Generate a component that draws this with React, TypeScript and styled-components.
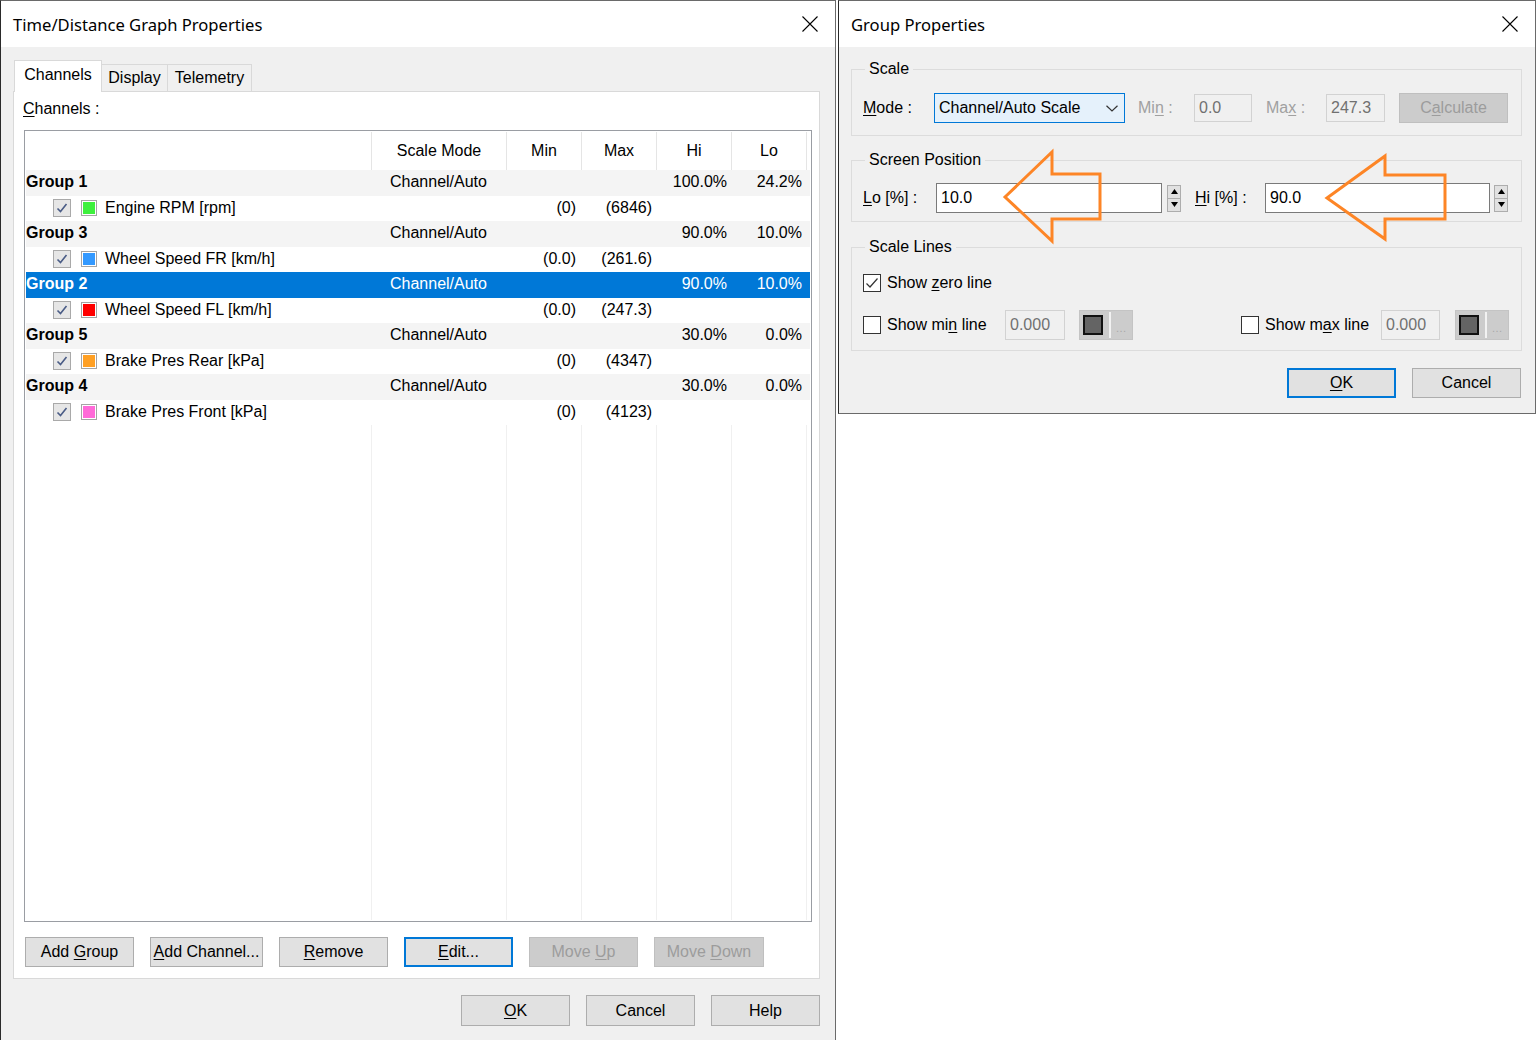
import * as React from 'react'
import styled, { createGlobalStyle, css } from 'styled-components'

const GlobalStyle = createGlobalStyle`
  html, body {
    margin: 0;
    padding: 0;
    background: #ffffff;
  }
  body {
    font-family: "Liberation Sans", Arial, sans-serif;
    font-size: 16px;
    color: #000;
  }
  * {
    box-sizing: border-box;
  }
  u {
    text-underline-offset: 2px;
  }
`

const Desktop = styled.div`
  display: flex;
  align-items: flex-start;
  width: 1537px;
  height: 1040px;
  overflow: hidden;
`

const Window = styled.div<{ $width: number; $height: number; $gap?: number }>`
  position: relative;
  flex-shrink: 0;
  display: flex;
  flex-direction: column;
  width: ${p => p.$width}px;
  height: ${p => p.$height}px;
  margin-left: ${p => p.$gap || 0}px;
  background: #f0f0f0;
  border: 1px solid #6a6a6a;
  border-left-color: #2a2a2a;
`

const TitleBar = styled.div`
  height: 46px;
  flex-shrink: 0;
  display: flex;
  align-items: center;
  justify-content: space-between;
  padding: 0 17px 0 12px;
  background: #ffffff;
  font-family: "Noto Sans", "Liberation Sans", sans-serif;
  font-size: 16.6px;
  color: #000;
`

const CloseIcon = () => (
  <svg width="16" height="16" viewBox="0 0 16 16">
    <path d="M0.5 0.5L15.5 15.5M15.5 0.5L0.5 15.5" stroke="#000" strokeWidth="1.1" fill="none"/>
  </svg>
)

/* ---------- left dialog ---------- */

const LeftBody = styled.div`
  flex: 1;
  display: flex;
  flex-direction: column;
  padding: 13px 0 0 12px;
`

const TabStrip = styled.div`
  display: flex;
  align-items: flex-end;
  height: 31px;
  padding-left: 1px;
  position: relative;
  z-index: 1;
`

const Tab = styled.div<{ $active?: boolean; $width: number }>`
  width: ${p => p.$width}px;
  height: ${p => (p.$active ? 31 : 27)}px;
  margin-right: -1px;
  border: 1px solid #d9d9d9;
  border-bottom: none;
  background: ${p => (p.$active ? '#ffffff' : '#f0f0f0')};
  display: flex;
  align-items: center;
  justify-content: center;
  ${p => p.$active && css`
    margin-bottom: -1px;
    height: 32px;
    padding-bottom: 3px;
  `}
`

const TabPanel = styled.div`
  width: 807px;
  height: 888px;
  background: #ffffff;
  border: 1px solid #d9d9d9;
  display: flex;
  flex-direction: column;
  padding: 8px 0 11px 10px;
`

const PanelLabel = styled.div`
  line-height: 18px;
  margin-left: -1px;
`

const ListBox = styled.div`
  margin-top: 12px;
  width: 788px;
  height: 792px;
  border: 1px solid #9a9da3;
  padding: 1px;
  display: flex;
  flex-direction: column;
`

const columns = '346px 135px 75px 75px 75px 75px 1fr'

const HeaderRow = styled.div`
  display: grid;
  grid-template-columns: ${columns};
  height: 38px;
  flex-shrink: 0;
`

const HeaderCell = styled.div<{ $last?: boolean }>`
  display: flex;
  align-items: center;
  justify-content: center;
  border-right: ${p => (p.$last ? 'none' : '1px solid #e5e5e5')};
`

const Row = styled.div<{ $kind: 'group' | 'channel'; $selected?: boolean }>`
  display: grid;
  grid-template-columns: ${columns};
  height: 25.5px;
  align-items: center;
  white-space: nowrap;
  background: ${p => (p.$selected ? '#0078d7' : p.$kind === 'group' ? '#f4f4f4' : '#ffffff')};
  color: ${p => (p.$selected ? '#ffffff' : '#000000')};
`

const Cell = styled.div<{ $align?: 'left' | 'right'; $pad?: number }>`
  text-align: ${p => p.$align || 'left'};
  padding-left: ${p => (p.$align === 'right' ? 0 : p.$pad || 0)}px;
  padding-right: ${p => (p.$align === 'right' ? p.$pad || 0 : 0)}px;
  overflow: hidden;
  margin-top: -1px;
`

const GroupName = styled.span`
  font-weight: bold;
`

const ChannelCell = styled.div`
  display: flex;
  align-items: center;
  padding-left: 27px;
  margin-top: -1px;
`

const ListCheck = styled.span`
  width: 18px;
  height: 18px;
  border: 1px solid #a9a9a9;
  background: #e6e6e6;
  display: inline-flex;
  align-items: center;
  justify-content: center;
`

const Swatch = styled.span<{ $color: string }>`
  width: 16px;
  height: 16px;
  margin-left: 10px;
  margin-right: 8px;
  border: 1px solid #a5a5a5;
  padding: 1px;
  background: ${p => p.$color};
  background-clip: content-box;
`

const Filler = styled.div`
  flex: 1;
  display: grid;
  grid-template-columns: ${columns};
`

const FillerCol = styled.div<{ $last?: boolean }>`
  border-right: ${p => (p.$last ? 'none' : '1px solid #f0f0f0')};
`

const ButtonRow = styled.div<{ $gap: number }>`
  display: flex;
  gap: ${p => p.$gap}px;
`

const ButtonFrame = styled.div<{ $width: number; $height?: number; $focused?: boolean; $disabled?: boolean; $ml?: number }>`
  width: ${p => p.$width}px;
  height: ${p => p.$height || 30}px;
  margin-left: ${p => p.$ml || 0}px;
  flex-shrink: 0;
  display: flex;
  align-items: center;
  justify-content: center;
  background: #e1e1e1;
  border: 1px solid #adadad;
  color: #000;
  white-space: nowrap;
  ${p => p.$focused && css`
    border: 2px solid #0078d7;
  `}
  ${p => p.$disabled && css`
    background: #cccccc;
    border-color: #bfbfbf;
    color: #9c9c9c;
  `}
`

interface ButtonProps {
  width: number
  height?: number
  focused?: boolean
  disabled?: boolean
  ml?: number
  children: React.ReactNode
}

const Button = ({ width, height, focused, disabled, ml, children }: ButtonProps) => (
  <ButtonFrame $width={width} $height={height} $focused={focused} $disabled={disabled} $ml={ml}>
    <span>{children}</span>
  </ButtonFrame>
)

const PanelButtons = styled(ButtonRow)`
  margin-top: 15px;
  margin-left: 1px;
`

const Footer = styled(ButtonRow)`
  margin-top: 16px;
  justify-content: flex-end;
  padding-right: 15px;
`

/* ---------- right dialog ---------- */

const RightBody = styled.div`
  flex: 1;
  display: flex;
  flex-direction: column;
  padding: 13px 13px 0 12px;
`

const GroupBox = styled.fieldset<{ $pt: number; $pb: number; $mt?: number }>`
  margin: ${p => p.$mt || 0}px 0 0 0;
  min-width: 0;
  border: 1px solid #dcdcdc;
  padding: ${p => p.$pt}px 12px ${p => p.$pb}px 11px;
`

const Legend = styled.legend`
  margin-left: 2px;
  padding: 0 4px;
  line-height: 18px;
`

const FieldRow = styled.div<{ $mt?: number }>`
  display: flex;
  align-items: center;
  height: 30px;
  margin-top: ${p => p.$mt || 0}px;
  white-space: nowrap;
`

const FieldLabel = styled.div<{ $width: number; $ml?: number; $disabled?: boolean }>`
  width: ${p => p.$width}px;
  margin-left: ${p => p.$ml || 0}px;
  flex-shrink: 0;
  color: ${p => (p.$disabled ? '#a0a0a0' : '#000')};
`

const Combo = styled.div`
  width: 191px;
  height: 30px;
  border: 1px solid #0078d7;
  background: #e5f1fb;
  display: flex;
  align-items: center;
  justify-content: space-between;
  padding: 0 6px 0 4px;
`

const TextBox = styled.div<{ $width: number; $disabled?: boolean; $height?: number }>`
  width: ${p => p.$width}px;
  height: ${p => p.$height || 30}px;
  flex-shrink: 0;
  display: flex;
  align-items: center;
  padding-left: 4px;
  border: 1px solid ${p => (p.$disabled ? '#d2d2d2' : '#7a7a7a')};
  background: ${p => (p.$disabled ? '#f0f0f0' : '#ffffff')};
  color: ${p => (p.$disabled ? '#707070' : '#000')};
`

const Spinner = styled.div<{ $ml: number }>`
  width: 14px;
  height: 27px;
  margin-left: ${p => p.$ml}px;
  flex-shrink: 0;
  display: flex;
  flex-direction: column;
  border: 1px solid #adadad;
  background: #e1e1e1;
`

const SpinHalf = styled.div<{ $top?: boolean }>`
  flex: 1;
  display: flex;
  align-items: center;
  justify-content: center;
  border-bottom: ${p => (p.$top ? '1px solid #adadad' : 'none')};
`

const CheckBox = styled.span`
  width: 18px;
  height: 18px;
  flex-shrink: 0;
  border: 1px solid #333333;
  background: #ffffff;
  display: inline-flex;
  align-items: center;
  justify-content: center;
`

const CheckLabel = styled.span<{ $width?: number }>`
  margin-left: 6px;
  width: ${p => (p.$width ? `${p.$width}px` : 'auto')};
  flex-shrink: 0;
`

const ColorButton = styled.div<{ $ml: number }>`
  width: 54px;
  height: 30px;
  margin-left: ${p => p.$ml}px;
  flex-shrink: 0;
  display: flex;
  align-items: center;
  background: #cccccc;
  border: 1px solid #c4c4c4;
  padding-left: 3px;
`

const ColorChip = styled.span`
  width: 20px;
  height: 20px;
  background: #646464;
  border: 2px solid #111111;
`

const ChipDivider = styled.span`
  width: 2px;
  height: 26px;
  margin-left: 6px;
  background: #f2f2f2;
`

const Dots = styled.span`
  margin-left: 5px;
  margin-top: 6px;
  font-size: 11px;
  color: #a8a8a8;
  letter-spacing: 0.5px;
`

const MaxGroup = styled.div`
  margin-left: auto;
  display: flex;
  align-items: center;
`

const DialogButtons = styled(ButtonRow)`
  margin-top: 17px;
  justify-content: flex-end;
  margin-right: 1px;
`

const Overlay = styled.svg`
  position: absolute;
  left: -1px;
  top: -1px;
  pointer-events: none;
`

/* ---------- data ---------- */

interface Group {
  name: string
  hi: string
  lo: string
  selected?: boolean
  channel: { name: string; color: string; min: string; max: string }
}

const groups: Group[] = [
  { name: 'Group 1', hi: '100.0%', lo: '24.2%', channel: { name: 'Engine RPM [rpm]', color: '#3df03d', min: '(0)', max: '(6846)' } },
  { name: 'Group 3', hi: '90.0%', lo: '10.0%', channel: { name: 'Wheel Speed FR [km/h]', color: '#3399ff', min: '(0.0)', max: '(261.6)' } },
  { name: 'Group 2', hi: '90.0%', lo: '10.0%', selected: true, channel: { name: 'Wheel Speed FL [km/h]', color: '#ff0000', min: '(0.0)', max: '(247.3)' } },
  { name: 'Group 5', hi: '30.0%', lo: '0.0%', channel: { name: 'Brake Pres Rear [kPa]', color: '#ffa024', min: '(0)', max: '(4347)' } },
  { name: 'Group 4', hi: '30.0%', lo: '0.0%', channel: { name: 'Brake Pres Front [kPa]', color: '#ff6ad8', min: '(0)', max: '(4123)' } },
]

const headers = ['', 'Scale Mode', 'Min', 'Max', 'Hi', 'Lo', '']

const ListTick = () => (
  <svg width="12" height="12" viewBox="0 0 12 12">
    <path d="M1.5 6.5L4.5 9.5L10.5 2" stroke="#4a5c86" strokeWidth="1.6" fill="none"/>
  </svg>
)

const Tick = () => (
  <svg width="14" height="14" viewBox="0 0 14 14">
    <path d="M1.5 7.5L5 11L12.5 2.5" stroke="#333" strokeWidth="1.2" fill="none"/>
  </svg>
)

const Chevron = () => (
  <svg width="12" height="7" viewBox="0 0 12 7">
    <path d="M0.5 0.8L6 6L11.5 0.8" stroke="#333" strokeWidth="1.2" fill="none"/>
  </svg>
)

const SpinBox = ({ ml }: { ml: number }) => (
  <Spinner $ml={ml}>
    <SpinHalf $top>
      <svg width="7" height="5" viewBox="0 0 7 5"><path d="M3.5 0L7 5H0Z" fill="#000"/></svg>
    </SpinHalf>
    <SpinHalf>
      <svg width="7" height="5" viewBox="0 0 7 5"><path d="M0 0H7L3.5 5Z" fill="#000"/></svg>
    </SpinHalf>
  </Spinner>
)

const LineColor = ({ ml }: { ml: number }) => (
  <ColorButton $ml={ml}>
    <ColorChip/>
    <ChipDivider/>
    <Dots>...</Dots>
  </ColorButton>
)

const TimeDistanceDialog = () => (
  <Window $width={836} $height={1041}>
    <TitleBar>
      <span>Time/Distance Graph Properties</span>
      <CloseIcon/>
    </TitleBar>
    <LeftBody>
      <TabStrip>
        <Tab $active $width={88}>Channels</Tab>
        <Tab $width={67}>Display</Tab>
        <Tab $width={85}>Telemetry</Tab>
      </TabStrip>
      <TabPanel>
        <PanelLabel><u>C</u>hannels :</PanelLabel>
        <ListBox>
          <HeaderRow>
            {headers.map((h, i) => (
              <HeaderCell key={i} $last={i === headers.length - 1}>{h}</HeaderCell>
            ))}
          </HeaderRow>
          {groups.map(g => (
            <React.Fragment key={g.name}>
              <Row $kind="group" $selected={g.selected}>
                <Cell><GroupName>{g.name}</GroupName></Cell>
                <Cell $pad={18}>Channel/Auto</Cell>
                <Cell/>
                <Cell/>
                <Cell $align="right" $pad={5}>{g.hi}</Cell>
                <Cell $align="right" $pad={5}>{g.lo}</Cell>
                <Cell/>
              </Row>
              <Row $kind="channel">
                <ChannelCell>
                  <ListCheck><ListTick/></ListCheck>
                  <Swatch $color={g.channel.color}/>
                  <span>{g.channel.name}</span>
                </ChannelCell>
                <Cell/>
                <Cell $align="right" $pad={6}>{g.channel.min}</Cell>
                <Cell $align="right" $pad={5}>{g.channel.max}</Cell>
                <Cell/>
                <Cell/>
                <Cell/>
              </Row>
            </React.Fragment>
          ))}
          <Filler>
            {headers.map((_, i) => <FillerCol key={i} $last={i === headers.length - 1}/>)}
          </Filler>
        </ListBox>
        <PanelButtons $gap={16}>
          <Button width={109}>Add <u>G</u>roup</Button>
          <Button width={113}><u>A</u>dd Channel...</Button>
          <Button width={109}><u>R</u>emove</Button>
          <Button width={109} focused><u>E</u>dit...</Button>
          <Button width={109} disabled>Move <u>U</u>p</Button>
          <Button width={110} disabled>Move <u>D</u>own</Button>
        </PanelButtons>
      </TabPanel>
      <Footer $gap={16}>
        <Button width={109} height={31}><u>O</u>K</Button>
        <Button width={109} height={31}>Cancel</Button>
        <Button width={109} height={31}>Help</Button>
      </Footer>
    </LeftBody>
  </Window>
)

const GroupPropertiesDialog = () => (
  <Window $width={698} $height={414} $gap={2}>
    <TitleBar>
      <span>Group Properties</span>
      <CloseIcon/>
    </TitleBar>
    <RightBody>
      <GroupBox $pt={15} $pb={12}>
        <Legend>Scale</Legend>
        <FieldRow>
          <FieldLabel $width={71}><u>M</u>ode :</FieldLabel>
          <Combo>
            <span>Channel/Auto Scale</span>
            <Chevron/>
          </Combo>
          <FieldLabel $width={56} $ml={13} $disabled>Mi<u>n</u> :</FieldLabel>
          <TextBox $width={58} $height={28} $disabled>0.0</TextBox>
          <FieldLabel $width={60} $ml={14} $disabled>Ma<u>x</u> :</FieldLabel>
          <TextBox $width={59} $height={28} $disabled>247.3</TextBox>
          <Button width={109} disabled ml={14}>C<u>a</u>lculate</Button>
        </FieldRow>
      </GroupBox>
      <GroupBox $pt={14} $pb={8} $mt={15}>
        <Legend>Screen Position</Legend>
        <FieldRow>
          <FieldLabel $width={73}><u>L</u>o [%] :</FieldLabel>
          <TextBox $width={226}>10.0</TextBox>
          <SpinBox ml={5}/>
          <FieldLabel $width={70} $ml={14}><u>H</u>i [%] :</FieldLabel>
          <TextBox $width={225}>90.0</TextBox>
          <SpinBox ml={4}/>
        </FieldRow>
      </GroupBox>
      <GroupBox $pt={12} $pb={10} $mt={16}>
        <Legend>Scale Lines</Legend>
        <FieldRow>
          <CheckBox><Tick/></CheckBox>
          <CheckLabel>Show <u>z</u>ero line</CheckLabel>
        </FieldRow>
        <FieldRow $mt={12}>
          <CheckBox/>
          <CheckLabel $width={118}>Show mi<u>n</u> line</CheckLabel>
          <TextBox $width={60} $disabled>0.000</TextBox>
          <LineColor ml={14}/>
          <MaxGroup>
            <CheckBox/>
            <CheckLabel $width={116}>Show m<u>a</u>x line</CheckLabel>
            <TextBox $width={59} $disabled>0.000</TextBox>
            <LineColor ml={15}/>
          </MaxGroup>
        </FieldRow>
      </GroupBox>
      <DialogButtons $gap={16}>
        <Button width={109} focused><u>O</u>K</Button>
        <Button width={109}>Cancel</Button>
      </DialogButtons>
    </RightBody>
    <Overlay width={698} height={414} viewBox="838 0 698 414">
      <polygon
        points="1005,197 1052,152 1052,174 1100,174 1100,219 1052,219 1052,241"
        fill="none" stroke="#fd8526" strokeWidth="3" strokeLinejoin="miter"
      />
      <polygon
        points="1327,198 1385,156 1385,175 1445,175 1445,219 1385,219 1385,239"
        fill="none" stroke="#fd8526" strokeWidth="3" strokeLinejoin="miter"
      />
    </Overlay>
  </Window>
)

export default function App() {
  return (
    <>
      <GlobalStyle/>
      <Desktop>
        <TimeDistanceDialog/>
        <GroupPropertiesDialog/>
      </Desktop>
    </>
  )
}
